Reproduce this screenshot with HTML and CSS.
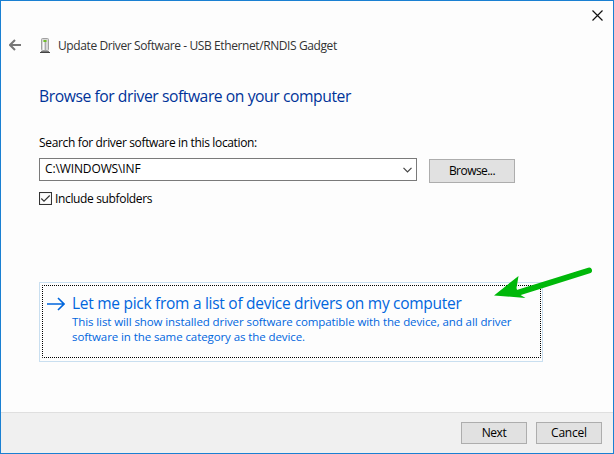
FILE: index.html
```html
<!DOCTYPE html>
<html lang="en">
<head>
<meta charset="utf-8">
<title>Update Driver Software</title>
<link rel="stylesheet" href="styles.css">
</head>
<body>
<div class="window">
  <div class="titlebar">
    <svg class="close" width="11" height="11" viewBox="0 0 11 11"><path d="M.5 .5l10 10M10.500 .5l-10 10"/></svg>
  </div>
  <header class="header">
    <svg class="back" width="12" height="12" viewBox="0 0 12 12"><path d="M12 6H1M6 1L1 6l5 5"/></svg>
    <svg class="device" width="10" height="15" viewBox="0 0 10 15">
      <rect x="1.500" y=".5" width="7" height="12" rx="1" fill="#d8d8d8" stroke="#a0a0a0"/>
      <path d="M3.500 4v8" stroke="#fafafa"/>
      <path d="M5.500 4v8" stroke="#aaa"/>
      <path d="M3.500 4V2h3v2z" fill="#70bd28"/>
      <path d="M1 13.500h8" stroke="#777"/><path d="M0 14.500h10" stroke="#444"/>
    </svg>
    <span class="caption">Update Driver Software - USB Ethernet/RNDIS Gadget</span>
  </header>
  <main class="content">
    <h1 class="heading"><span>Browse for driver software on your computer</span></h1>
    <label class="label">Search for driver software in this location:</label>
    <div class="location">
      <div class="combo"><span>C:\WINDOWS\INF</span>
        <svg width="9" height="6" viewBox="0 0 9 6"><path d="M.5 .8l4 4 4-4"/></svg>
      </div>
      <button class="button browse">Browse...</button>
    </div>
    <div class="check">
      <svg width="13" height="13" viewBox="0 0 13 13"><rect x=".5" y=".5" width="12" height="12"/><path d="M2.300 6.500l2.700 2.700 5.700-5.700"/></svg>
      <span>Include subfolders</span>
    </div>
    <div class="command">
      <svg class="focus" width="499" height="73"><rect x=".5" y=".5" width="498" height="72"/></svg>
      <svg class="go" width="18" height="14" viewBox="0 0 18 14"><path d="M0 7h17M11 1l6 6-6 6"/></svg>
      <div class="command-text">
        <div class="command-title">Let me pick from a list of device drivers on my computer</div>
        <div class="note note-first">This list will show installed driver software compatible with the device, and all driver</div>
        <div class="note note-last">software in the same category as the device.</div>
      </div>
      <svg class="pointer" width="100" height="42" viewBox="0 0 100 42"><path d="M95 7.500L22 30.300" fill="none" stroke="#00b80a" stroke-width="6" stroke-linecap="round"/><path d="M0 32.500L24.500 13l-2 12 1.500 5.500 7.500 4.500z" fill="#00b80a"/></svg>
    </div>
  </main>
  <footer class="footer">
    <button class="button next">Next</button>
    <button class="button cancel">Cancel</button>
  </footer>
</div>
</body>
</html>
```
FILE: styles.css
```css
* { box-sizing: border-box; }
body { margin: 0; font: 12px/16px "Open Sans", "Noto Sans", sans-serif; color: #000; }
svg { display: block; flex: none; fill: none; }
.window { width: 614px; height: 454px; border: 1px solid #1a80d2; background: #fdfdfd; display: flex; flex-direction: column; white-space: nowrap; }
.titlebar { height: 29px; display: flex; justify-content: flex-end; padding: 9px 10px 0 0; }
.close { stroke: #111; stroke-width: 1.2; }
.header { height: 32px; display: flex; align-items: center; padding-left: 8px; color: #333; }
.back { stroke: #777; stroke-width: 2; margin-top: -2px; }
.device { margin-left: 19px; margin-top: -1px; }
.caption { margin-left: 8px; letter-spacing: -.4px; }
.content { flex: 1; padding: 20px 38px 0; }
.heading { margin: 0; font-size: 15.700px; font-weight: 400; line-height: 28px; color: #003399; letter-spacing: -.44px; }
.label { display: block; width: max-content; margin-top: 25px; letter-spacing: -.345px; }
.location { display: flex; gap: 12px; margin-top: 7px; }
.combo { width: 378px; height: 23px; border: 1px solid #7a7a7a; background: #fff; display: flex; align-items: center; justify-content: space-between; padding: 0 4px 2px 5px; letter-spacing: -.12px; }
.combo svg { stroke: #444; stroke-width: 1.2; margin-top: 2px; }
.button { height: 22px; padding: 0; border: 1px solid #adadad; background: #e1e1e1; color: #000; font: inherit; letter-spacing: -.2px; }
.browse { width: 86px; height: 24px; margin-top: 1px; letter-spacing: -.55px; }
.next { letter-spacing: -.5px; }
.check { display: flex; align-items: center; height: 13px; margin-top: 9px; gap: 3px; letter-spacing: -.35px; }
.check svg { stroke: #333; stroke-width: 1.1; }
.command { position: relative; width: 504px; height: 80px; border: 1px solid #c9dff0; margin-top: 77px; padding: 10px 0 0 7px; display: flex; gap: 7px; color: #0066dd; }
.focus { position: absolute; left: 2px; top: 2px; stroke: #000; stroke-dasharray: 1 1; stroke-dashoffset: .5; }
.go { margin-top: 4px; stroke: #0066dd; stroke-width: 1.6; }
.command-title { font-size: 15.500px; line-height: 20px; letter-spacing: -.28px; width: max-content; }
.note { font-size: 11.500px; line-height: 15px; letter-spacing: -.09px; width: max-content; }
.note-first { margin-top: 1px; }
.pointer { position: absolute; left: 454px; top: -20px; }
.footer { height: 41px; border-top: 1px solid #dfdfdf; background: #f0f0f0; display: flex; justify-content: flex-end; gap: 9px; padding: 9px 11px 0 0; }
.footer .button { width: 66px; }
```
